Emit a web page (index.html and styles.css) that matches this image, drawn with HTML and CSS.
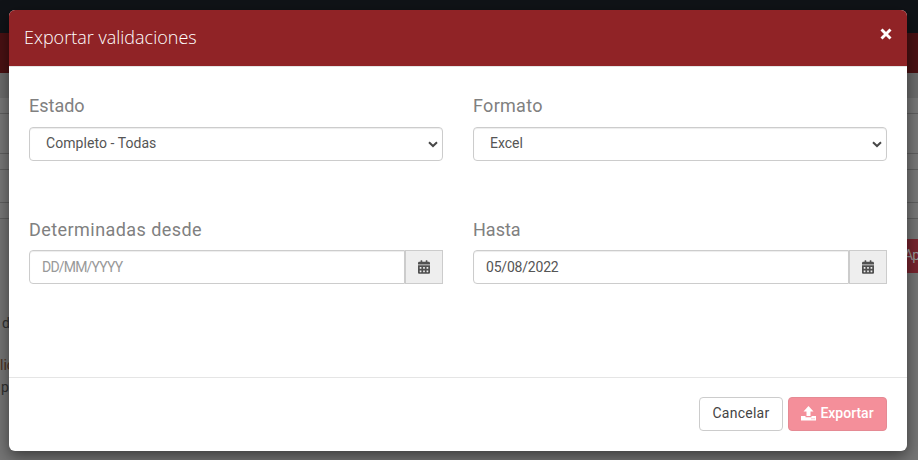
FILE: index.html
```html
<!DOCTYPE html>
<html lang="es">
<head>
<meta charset="utf-8">
<title>Exportar validaciones</title>
<link rel="stylesheet" href="styles.css">
</head>
<body>
<div class="page">
  <div class="topbar"></div>
  <div class="navbar"></div>
  <div class="crumbs"></div>
  <div class="strip s1"></div>
  <div class="strip s2"></div>
  <div class="strip s3"></div>
  <div class="strip s4"></div>
  <div class="strip s5"></div>
  <div class="apply-row"><span class="apply">Ap</span></div>
  <div class="copy"><p class="c1">d</p><p class="c2">lic</p><p class="c3">p</p></div>
</div>
<div class="modal">
  <header class="modal-header">
    <h1>Exportar validaciones</h1>
    <button class="close" aria-label="Cerrar"><svg width="12" height="12" viewBox="0 0 12 12"><path d="M1.500 1.500L10.500 10.500M10.500 1.500L1.500 10.500" fill="none" stroke="#fff" stroke-width="2.900"/></svg></button>
  </header>
  <main class="modal-body">
    <div class="field">
      <label class="l-estado">Estado</label>
      <div class="control select"><span class="t-todas">Completo - Todas</span><svg width="10" height="7" viewBox="0 0 10 7"><path d="M1 1.200L5 5L9 1.200" fill="none" stroke="#484848" stroke-width="2"/></svg></div>
    </div>
    <div class="field">
      <label class="l-formato">Formato</label>
      <div class="control select"><span class="t-excel">Excel</span><svg width="10" height="7" viewBox="0 0 10 7"><path d="M1 1.200L5 5L9 1.200" fill="none" stroke="#484848" stroke-width="2"/></svg></div>
    </div>
    <div class="field">
      <label class="l-desde">Determinadas desde</label>
      <div class="group"><div class="control input placeholder"><span>DD/MM/YYYY</span></div><div class="addon"><svg width="12" height="14" viewBox="0 0 448 512"><path fill="#505050" d="M0 464c0 26.500 21.500 48 48 48h352c26.500 0 48-21.500 48-48V192H0v272zm320-196c0-6.600 5.400-12 12-12h40c6.600 0 12 5.400 12 12v40c0 6.600-5.400 12-12 12h-40c-6.600 0-12-5.400-12-12v-40zm0 128c0-6.600 5.400-12 12-12h40c6.600 0 12 5.400 12 12v40c0 6.600-5.400 12-12 12h-40c-6.600 0-12-5.400-12-12v-40zM192 268c0-6.600 5.400-12 12-12h40c6.600 0 12 5.400 12 12v40c0 6.600-5.400 12-12 12h-40c-6.600 0-12-5.400-12-12v-40zm0 128c0-6.600 5.400-12 12-12h40c6.600 0 12 5.400 12 12v40c0 6.600-5.400 12-12 12h-40c-6.600 0-12-5.400-12-12v-40zM64 268c0-6.600 5.400-12 12-12h40c6.600 0 12 5.400 12 12v40c0 6.600-5.400 12-12 12H76c-6.600 0-12-5.400-12-12v-40zm0 128c0-6.600 5.400-12 12-12h40c6.600 0 12 5.400 12 12v40c0 6.600-5.400 12-12 12H76c-6.600 0-12-5.400-12-12v-40zM400 64h-48V16c0-8.800-7.200-16-16-16h-32c-8.800 0-16 7.200-16 16v48H160V16c0-8.800-7.200-16-16-16h-32c-8.800 0-16 7.200-16 16v48H48C21.500 64 0 85.500 0 112v48h448v-48c0-26.500-21.500-48-48-48z"/></svg></div></div>
    </div>
    <div class="field">
      <label class="l-hasta">Hasta</label>
      <div class="group"><div class="control input"><span class="t-date">05/08/2022</span></div><div class="addon"><svg width="12" height="14" viewBox="0 0 448 512"><path fill="#505050" d="M0 464c0 26.500 21.500 48 48 48h352c26.500 0 48-21.500 48-48V192H0v272zm320-196c0-6.600 5.400-12 12-12h40c6.600 0 12 5.400 12 12v40c0 6.600-5.400 12-12 12h-40c-6.600 0-12-5.400-12-12v-40zm0 128c0-6.600 5.400-12 12-12h40c6.600 0 12 5.400 12 12v40c0 6.600-5.400 12-12 12h-40c-6.600 0-12-5.400-12-12v-40zM192 268c0-6.600 5.400-12 12-12h40c6.600 0 12 5.400 12 12v40c0 6.600-5.400 12-12 12h-40c-6.600 0-12-5.400-12-12v-40zm0 128c0-6.600 5.400-12 12-12h40c6.600 0 12 5.400 12 12v40c0 6.600-5.400 12-12 12h-40c-6.600 0-12-5.400-12-12v-40zM64 268c0-6.600 5.400-12 12-12h40c6.600 0 12 5.400 12 12v40c0 6.600-5.400 12-12 12H76c-6.600 0-12-5.400-12-12v-40zm0 128c0-6.600 5.400-12 12-12h40c6.600 0 12 5.400 12 12v40c0 6.600-5.400 12-12 12H76c-6.600 0-12-5.400-12-12v-40zM400 64h-48V16c0-8.800-7.200-16-16-16h-32c-8.800 0-16 7.200-16 16v48H160V16c0-8.800-7.200-16-16-16h-32c-8.800 0-16 7.200-16 16v48H48C21.500 64 0 85.500 0 112v48h448v-48c0-26.500-21.500-48-48-48z"/></svg></div></div>
    </div>
  </main>
  <footer class="modal-footer">
    <button class="btn cancel">Cancelar</button>
    <button class="btn export"><svg width="15" height="15" viewBox="0 0 15 15"><path fill="#fff" d="M7.500 0L12.500 5.500H9.500V10H5.500V5.500H2.500ZM0 10H4.500V11.300H10.500V10H15V14.500H0Z"/><path fill="#f48f9a" d="M10.500 12.200h1v1h-1zM12.500 12.200h1v1h-1z"/></svg><span>Exportar</span></button>
  </footer>
</div>
</body>
</html>
```
FILE: styles.css
```css
* { box-sizing: border-box; }
body {
  margin: 0;
  height: 460px;
  overflow: hidden;
  background: #757575;
  font-family: Roboto, "Liberation Sans", sans-serif;
  font-size: 14px;
  color: #555;
}
.page { height: 460px; overflow: hidden; }
.topbar { height: 33px; background: #101317; }
.navbar { height: 40px; background: #4a1113; }
.crumbs { height: 25px; background: #6c6c6c; }
.strip { border-bottom: 1px solid #5f5f5f; background: #787878; }
.s1 { height: 16px; }
.s2 { height: 40px; }
.s3 { height: 16px; }
.s4 { height: 33px; }
.s5 { height: 16px; }
.apply-row { display: flex; justify-content: flex-end; padding-top: 20px; }
.apply {
  width: 18px;
  height: 34px;
  padding-left: 4px;
  letter-spacing: -1px;
  overflow: hidden;
  background: #77242e;
  color: #999;
  line-height: 33px;
  font-size: 14px;
}
.copy { padding-top: 40px; color: #303030; font-size: 14px; line-height: 20px; }
.copy p { margin: 0; }
.copy .c1 { padding-left: 2px; margin-bottom: 22px; }
.copy .c2 { color: #4b3020; margin-bottom: 2px; }
.copy .c3 { padding-left: 1px; }

.modal {
  position: absolute;
  left: 9px;
  top: 10px;
  width: 898px;
  height: 441px;
  display: flex;
  flex-direction: column;
  overflow: hidden;
  border-radius: 6px;
  background: #fff;
  box-shadow: 0 5px 15px rgba(0, 0, 0, .5);
}
.modal-header {
  height: 57px;
  flex: none;
  display: flex;
  align-items: center;
  justify-content: space-between;
  padding: 0 15px;
  background: #902326;
  border-bottom: 1px solid #e5e5e5;
}
h1 {
  margin: 0 0 2px;
  font: 300 18px/24px "Open Sans", sans-serif;
  color: #fff;
}
.close {
  width: 12px;
  height: 12px;
  margin-bottom: 8px;
  padding: 0;
  border: 0;
  background: none;
  display: flex;
}
.modal-body {
  flex: 1;
  display: grid;
  grid-template-columns: 414px 414px;
  grid-template-rows: 124px 1fr;
  column-gap: 30px;
  padding: 27px 20px 0;
}
label {
  display: block;
  height: 33px;
  line-height: 24px;
  font-size: 18px;
  color: #808080;
  white-space: nowrap;
}
.l-formato { letter-spacing: .3px; }
.l-desde { letter-spacing: .44px; }
.field:nth-child(n+3) label { height: 32px; }
.control {
  height: 34px;
  display: flex;
  align-items: center;
  border: 1px solid #ccc;
  border-radius: 4px;
  background: #fff;
  line-height: 20px;
  box-shadow: inset 0 1px 1px rgba(0, 0, 0, .075);
}
.select { justify-content: space-between; padding: 0 4px 0 16px; }
.select span { margin-bottom: 2px; }
.t-todas { letter-spacing: .06px; }
.group { display: flex; }
.input { flex: 1; padding-left: 12px; border-radius: 4px 0 0 4px; }
.placeholder { color: #999; letter-spacing: -.8px; }
.t-date { letter-spacing: -.2px; }
.addon {
  width: 38px;
  height: 34px;
  display: flex;
  align-items: center;
  justify-content: center;
  border: 1px solid #ccc;
  background: #eee;
}
.modal-footer {
  height: 74px;
  flex: none;
  display: flex;
  justify-content: flex-end;
  gap: 5px;
  padding: 19px 20px 0;
  border-top: 1px solid #e5e5e5;
}
.btn {
  height: 34px;
  display: flex;
  align-items: center;
  justify-content: center;
  padding: 0 0 2px;
  border: 1px solid #ccc;
  border-radius: 4px;
  background: #fff;
  color: #444;
  font: 14px/20px Roboto, sans-serif;
}
.cancel { width: 84px; letter-spacing: .25px; }
.export {
  width: 99px;
  gap: 4px;
  color: #fff;
  background: #f48f9a;
  border-color: #e58a94;
  font-weight: 500;
}
```
